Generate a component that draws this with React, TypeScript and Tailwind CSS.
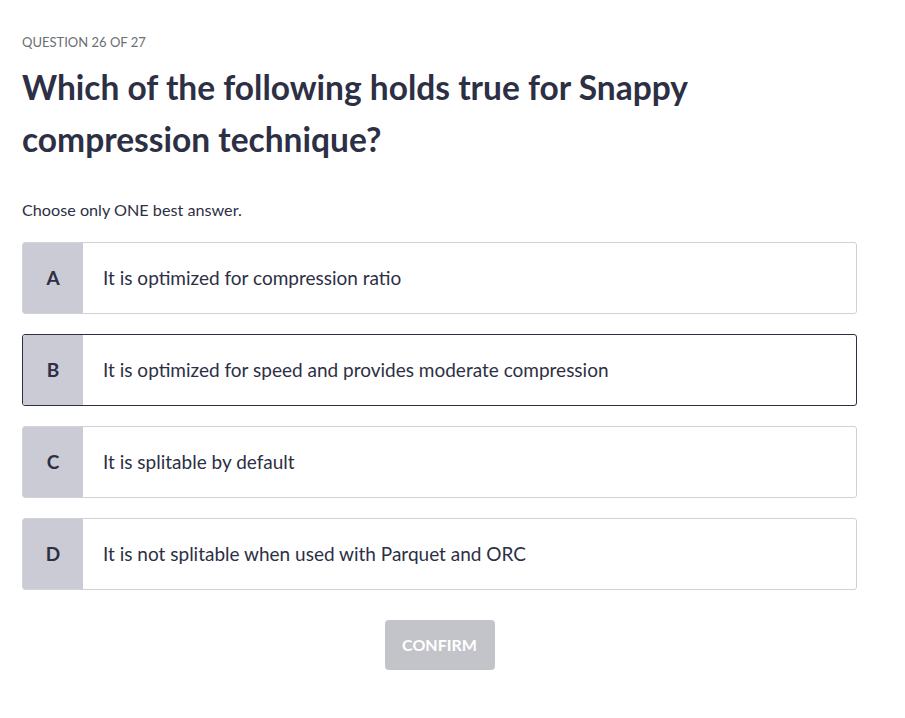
const options = [
  { letter: 'A', text: 'It is optimized for compression ratio' },
  { letter: 'B', text: 'It is optimized for speed and provides moderate compression' },
  { letter: 'C', text: 'It is splitable by default' },
  { letter: 'D', text: 'It is not splitable when used with Parquet and ORC' },
];

export default function App() {
  const selected = 'B';

  return (
    <div className="min-h-screen bg-white font-['Lato',sans-serif] text-[#2d2f45]">
      <div className="w-[835px] ml-[22px] pt-[33px]">
        <div className="text-[13px] leading-[18px] text-[#6a6f73] uppercase">Question 26 of 27</div>
        <h1 className="mt-[10px] text-[33.5px] leading-[52px] font-bold">
          Which of the following holds true for Snappy
          <br />
          compression technique?
        </h1>
        <p className="mt-[35px] text-[16.2px] leading-[20px]">Choose only ONE best answer.</p>

        <div className="mt-[22px] flex flex-col gap-[20px]">
          {options.map((opt) => (
            <button
              key={opt.letter}
              className={`flex h-[72px] w-full items-stretch overflow-hidden rounded-[3px] border text-left ${
                selected === opt.letter ? 'border-[#2d2f45]' : 'border-[#d1d2d8]'
              }`}
            >
              <div className="flex w-[60px] shrink-0 items-center justify-center bg-[#cacbd4] text-[19px] font-bold">
                {opt.letter}
              </div>
              <div className="flex items-center pl-[20px] text-[19px]">{opt.text}</div>
            </button>
          ))}
        </div>

        <div className="mt-[30px] flex justify-center">
          <button
            disabled
            className="h-[50px] w-[110px] rounded-[4px] bg-[#c3c4c9] text-[16px] font-bold uppercase text-white"
          >
            Confirm
          </button>
        </div>
      </div>
    </div>
  );
}
